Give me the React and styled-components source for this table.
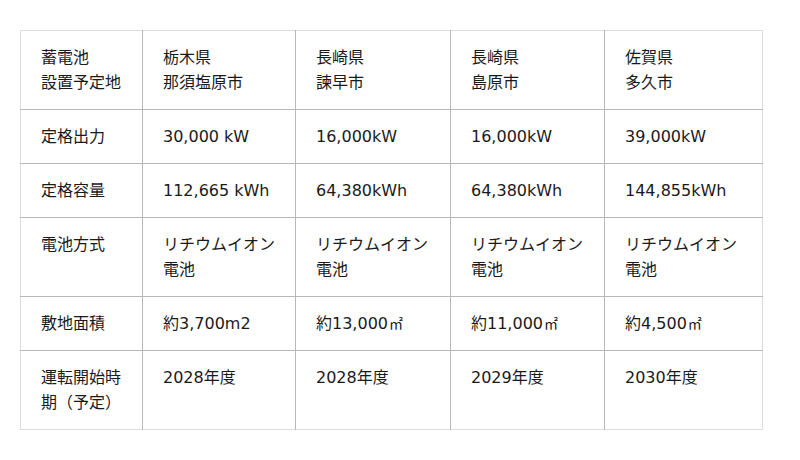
import React from "react"
import styled, { createGlobalStyle } from "styled-components"

const GlobalStyle = createGlobalStyle`
  body {
    margin: 0;
    background: #fff;
    font-family: "DejaVu Sans", "Noto Sans CJK JP", sans-serif;
    color: #1a1a1a;
  }
`

const Wrapper = styled.div`
  padding: 30px 0 0 20px;
`

const Table = styled.table`
  border-collapse: collapse;
  table-layout: fixed;
  width: 742px;
  border: 1px solid #dcdcdc;
  font-size: 16px;
  line-height: 25px;

  td {
    padding: 14px 8px 14px 20px;
    vertical-align: top;
    text-align: left;
    white-space: nowrap;
  }
  td + td {
    border-left: 1px solid #b8b8b8;
  }
  tr + tr td {
    border-top: 1px solid #b8b8b8;
  }
`

const Unit = styled.span`
  font-family: "Noto Sans CJK JP", sans-serif;
  font-size: 14px;
  line-height: 1;
  margin-left: 1px;
`

const rows = [
  ["蓄電池\n設置予定地", "栃木県\n那須塩原市", "長崎県\n諫早市", "長崎県\n島原市", "佐賀県\n多久市"],
  ["定格出力", "30,000 kW", "16,000kW", "16,000kW", "39,000kW"],
  ["定格容量", "112,665 kWh", "64,380kWh", "64,380kWh", "144,855kWh"],
  ["電池方式", "リチウムイオン\n電池", "リチウムイオン\n電池", "リチウムイオン\n電池", "リチウムイオン\n電池"],
  ["敷地面積", "約3,700m2", "約13,000㎡", "約11,000㎡", "約4,500㎡"],
  ["運転開始時\n期（予定）", "2028年度", "2028年度", "2029年度", "2030年度"],
]

const widths = [122, 153, 155, 154, 158]

const renderLine = (line) =>
  line.split(/(㎡)/).map((part, i) =>
    part === "㎡" ? <Unit key={i}>{part}</Unit> : part
  )

const Cell = ({ text }) => (
  <td>
    {text.split("\n").map((line, i) => (
      <div key={i}>{renderLine(line)}</div>
    ))}
  </td>
)

const App = () => {
  return (
    <>
      <GlobalStyle />
      <Wrapper>
        <Table>
          <colgroup>
            {widths.map((w, i) => (
              <col key={i} style={{ width: w }} />
            ))}
          </colgroup>
          <tbody>
            {rows.map((row, r) => (
              <tr key={r}>
                {row.map((c, i) => (
                  <Cell key={i} text={c} />
                ))}
              </tr>
            ))}
          </tbody>
        </Table>
      </Wrapper>
    </>
  )
}

export default App
